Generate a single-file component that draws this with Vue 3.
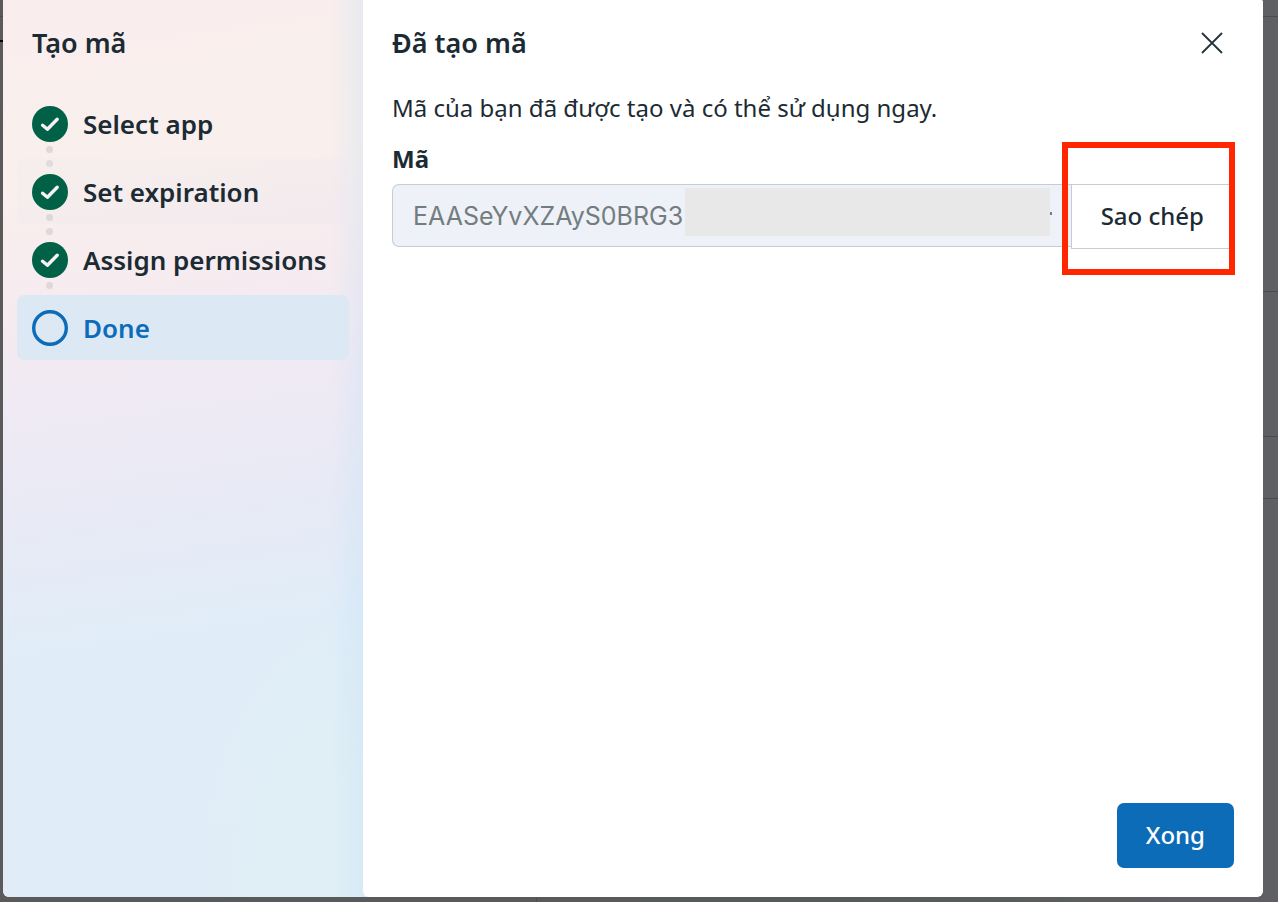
<script setup>
import { ref } from 'vue'

const steps = [
  { label: 'Select app', state: 'complete' },
  { label: 'Set expiration', state: 'complete', hovered: true },
  { label: 'Assign permissions', state: 'complete' },
  { label: 'Done', state: 'current' },
]
const token = ref('EAASeYvXZAyS0BRG3')
</script>

<template>
  <div class="backdrop">
    <div class="dialog" role="dialog" aria-modal="true" aria-labelledby="dialog-title">
      <aside class="sidebar">
        <h2 class="title sidebar-title">Tạo mã</h2>
        <ol class="steps">
          <li
            v-for="(step, index) in steps"
            :key="step.label"
            class="step"
            :class="[step.state, { hovered: step.hovered }]"
            :aria-current="step.state === 'current' ? 'step' : undefined"
          >
            <svg v-if="step.state === 'complete'" class="marker" viewBox="0 0 36 36" aria-hidden="true">
              <circle cx="18" cy="18" r="18" fill="#006147" />
              <path d="M10.6 19.2 L15.4 23.2 L25.2 13.3" fill="none" stroke="#f7f1f1" stroke-width="3.4" stroke-linecap="round" stroke-linejoin="round" />
            </svg>
            <svg v-else class="marker" viewBox="0 0 36 36" aria-hidden="true">
              <circle cx="18" cy="18" r="16.3" fill="none" stroke="#0d6cb9" stroke-width="3.4" />
            </svg>
            <span>{{ step.label }}</span>
            <span v-if="index < steps.length - 1" class="dots" aria-hidden="true"><i></i><i></i></span>
          </li>
        </ol>
      </aside>

      <main class="content">
        <header class="header">
          <h1 id="dialog-title" class="title">Đã tạo mã</h1>
          <button class="close" type="button" aria-label="Đóng">
            <svg viewBox="0 0 22 22" aria-hidden="true">
              <path d="M1 1 L21 21 M21 1 L1 21" fill="none" stroke="#24333b" stroke-width="1.8" />
            </svg>
          </button>
        </header>
        <p class="message">Mã của bạn đã được tạo và có thể sử dụng ngay.</p>
        <label class="label" for="token">Mã</label>
        <div class="token-row">
          <div class="field">
            <input id="token" v-model="token" type="text" readonly />
            <span class="redaction"></span>
            <span class="tick"></span>
          </div>
          <div class="copy-wrap">
            <button class="copy" type="button">Sao chép</button>
            <span class="highlight"></span>
          </div>
        </div>
        <footer class="footer">
          <button class="done" type="button">Xong</button>
        </footer>
      </main>
    </div>
  </div>
</template>

<style>
body {
  margin: 0;
}
</style>

<style scoped>
.backdrop,
.backdrop * {
  box-sizing: border-box;
}

.backdrop {
  min-height: 100vh;
  display: flex;
  padding: 0 15px 5px 3px;
  font-family: "Noto Sans", sans-serif;
  color: #1c2b33;
  background:
    linear-gradient(#000, #000) 0 40px / 4px 2px no-repeat,
    linear-gradient(#4a4c50, #4a4c50) 0 16px / 100% 1px no-repeat,
    linear-gradient(#484c51, #484c51) 100% 291px / 16px 1px no-repeat,
    linear-gradient(#484c51, #484c51) 100% 436px / 16px 1px no-repeat,
    linear-gradient(#484c51, #484c51) 100% 498px / 16px 1px no-repeat,
    linear-gradient(#4c4e50, #4c4e50) 536px 100% / 1px 5px no-repeat,
    linear-gradient(90deg, #5b5a5a, #575a5a 60%, #5e6063);
}

.dialog {
  flex: 1;
  display: grid;
  grid-template-columns: 360px 1fr;
  border-radius: 0 2px 6px 6px;
  overflow: hidden;
  background: #d8e9f5;
}

.sidebar {
  padding: 24px 14px;
  background:
    linear-gradient(90deg, rgba(190, 220, 245, 0) 91%, rgba(190, 220, 245, 0.26)),
    radial-gradient(ellipse 180px 300px at 100% 100%, #e0eff5 40%, rgba(224, 239, 245, 0)),
    linear-gradient(172deg, #f9eeed 0%, #f9efed 20%, #f6ebef 32%, #efeaf4 44%, #e8eaf5 56%, #e2ecf7 66%, #e0edf8 70%, #e0ecf8 100%);
}

.title {
  margin: 0;
  font-size: 27px;
  line-height: 38px;
  font-weight: 600;
}

.sidebar-title {
  padding-left: 15px;
}

.steps {
  list-style: none;
  margin: 0;
  padding: 29px 0 0;
  display: grid;
  gap: 3px;
}

.step {
  position: relative;
  display: flex;
  align-items: center;
  gap: 15px;
  height: 65px;
  padding: 0 15px;
  border-radius: 7px;
  font-size: 26px;
  line-height: 36px;
  font-weight: 600;
  white-space: nowrap;
}

.hovered {
  background: rgba(235, 228, 240, 0.2);
}

.current {
  background: #dce9f5;
  color: #0d6cb9;
}

.marker {
  flex: none;
  width: 36px;
  height: 36px;
}

.dots {
  position: absolute;
  left: 29px;
  top: 55px;
  display: grid;
  gap: 7px;
}

.dots i {
  width: 7px;
  height: 7px;
  border-radius: 50%;
  background: #e0d7d8;
}

.content {
  display: flex;
  flex-direction: column;
  padding: 24px 29px 29px;
  border-radius: 0 0 6px 6px;
  background: #fff;
}

.header {
  display: flex;
  align-items: center;
  justify-content: space-between;
}

.close {
  width: 44px;
  height: 38px;
  padding: 0 11px;
  border: 0;
  background: none;
}

.close svg {
  display: block;
  width: 22px;
  height: 22px;
}

.message {
  margin: 28px 0 0;
  font-size: 24px;
  line-height: 36px;
}

.label {
  padding: 15px 0 8px;
  font-size: 24px;
  line-height: 35px;
  font-weight: 700;
}

.token-row {
  display: flex;
  align-items: flex-start;
}

.field {
  position: relative;
  flex: 1;
  min-width: 0;
}

.field input {
  display: block;
  width: 100%;
  height: 63px;
  padding: 0 20px;
  border: 1px solid #c3cdd5;
  border-right: 0;
  border-radius: 7px 0 0 7px;
  background: #eef1f7;
  color: #737d80;
  font: 400 25px/36px Inter, "Noto Sans", sans-serif;
  outline: none;
}

.redaction {
  position: absolute;
  left: 293px;
  right: 21px;
  top: 4px;
  height: 48px;
  background: #e8e8e8;
}

.tick {
  position: absolute;
  right: 19px;
  top: 28px;
  width: 2px;
  height: 3px;
  background: #737d80;
}

.copy-wrap {
  position: relative;
}

.copy {
  display: block;
  height: 65px;
  padding: 0 29px 2px;
  border: 1px solid #c3cdd5;
  background: #fff;
  color: #1c2b33;
  font: 500 24px/36px "Noto Sans", sans-serif;
}

.highlight {
  position: absolute;
  inset: -42px -1px -26px -9px;
  border: 6px solid #ff2600;
  pointer-events: none;
}

.footer {
  display: flex;
  justify-content: flex-end;
  margin-top: auto;
}

.done {
  height: 65px;
  padding: 0 29px 2px;
  border: 0;
  border-radius: 7px;
  background: #0d6cb7;
  color: #fff;
  font: 500 24px/36px "Noto Sans", sans-serif;
}
</style>
